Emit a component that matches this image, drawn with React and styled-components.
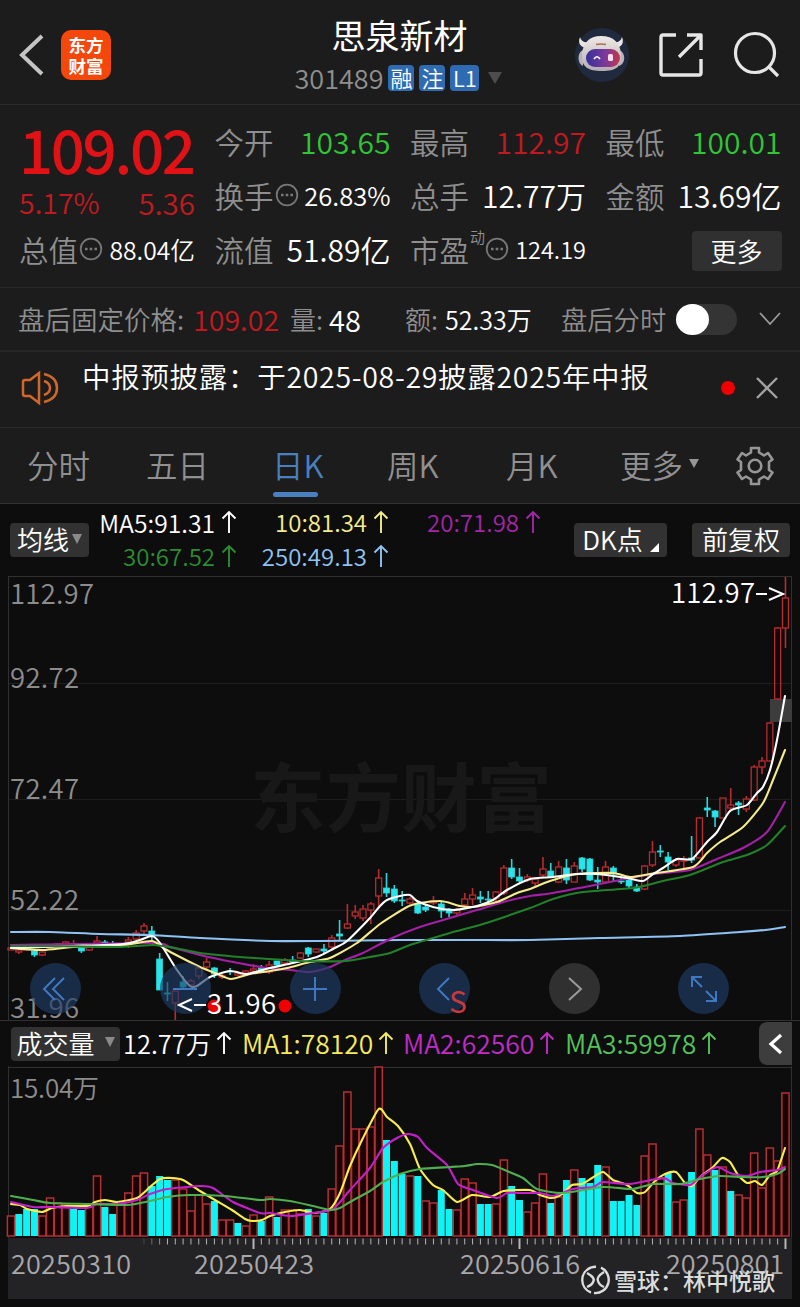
import styled, { createGlobalStyle } from "styled-components"

const GlobalStyle = createGlobalStyle`
    body {
        margin: 0;
        background: #0d0d0d;
        font-family: "Noto Sans CJK SC", "Noto Sans", sans-serif;
        font-weight: 350;
    }

    * {
        box-sizing: border-box;
    }
`;

const RED = "#e01216"
const DARK_RED = "#c01a20"
const GREEN = "#2fc535"
const GREY = "#8f8f8f"

// [up, high, body top, body bottom, low]
const candles = [
    [1, 948, 948, 950, 950], [1, 948, 950, 952, 954], [1, 947, 948, 950, 950], [0, 949, 951, 955, 957],
    [1, 951, 952, 955, 956], [1, 944, 946, 948, 948], [1, 943, 944, 946, 947], [1, 941, 942, 945, 945],
    [1, 940, 944, 946, 946], [0, 943, 947, 951, 953], [1, 946, 947, 950, 951], [1, 936, 941, 943, 944],
    [0, 940, 942, 944, 945], [0, 941, 944, 945, 946], [1, 944, 945, 946, 947], [1, 937, 940, 942, 948],
    [1, 930, 933, 939, 940], [1, 923, 926, 931, 934], [0, 926, 931, 936, 942], [0, 953, 959, 990, 990],
    [0, 982, 993, 994, 1001], [1, 990, 991, 1003, 1020], [0, 976, 982, 987, 989], [1, 979, 981, 985, 986],
    [1, 967, 968, 976, 979], [1, 958, 962, 967, 971], [0, 967, 968, 974, 978], [1, 974, 976, 977, 979],
    [0, 968, 971, 972, 975], [1, 971, 973, 975, 976], [1, 970, 971, 973, 974], [1, 964, 969, 971, 973],
    [0, 965, 968, 970, 972], [1, 961, 965, 972, 974], [0, 961, 961, 965, 967], [1, 958, 960, 963, 965],
    [0, 956, 960, 962, 964], [1, 952, 953, 958, 959], [0, 947, 948, 954, 957], [1, 949, 949, 952, 953],
    [0, 944, 949, 951, 953], [1, 935, 938, 947, 949], [0, 920, 934, 936, 940], [1, 904, 924, 928, 929],
    [1, 905, 912, 916, 919], [1, 905, 909, 918, 921], [1, 902, 904, 910, 924], [1, 869, 878, 896, 906],
    [0, 873, 888, 893, 897], [0, 885, 889, 901, 903], [0, 891, 900, 901, 906], [1, 897, 899, 903, 906],
    [0, 902, 904, 913, 914], [0, 905, 907, 910, 912], [1, 896, 901, 903, 905], [0, 902, 904, 911, 918],
    [0, 908, 909, 913, 917], [1, 908, 910, 913, 915], [1, 893, 899, 905, 907], [1, 888, 895, 899, 905],
    [0, 891, 897, 899, 903], [0, 891, 899, 900, 904], [1, 891, 892, 898, 902], [1, 865, 868, 893, 895],
    [0, 859, 868, 877, 879], [0, 868, 877, 881, 882], [1, 874, 877, 880, 882], [1, 877, 879, 883, 886],
    [1, 857, 869, 875, 877], [0, 863, 871, 877, 878], [1, 861, 867, 882, 883], [0, 859, 868, 880, 884],
    [1, 862, 866, 882, 882], [0, 857, 858, 869, 872], [0, 858, 859, 880, 881], [0, 867, 880, 882, 889],
    [1, 861, 867, 882, 884], [0, 866, 868, 874, 882], [0, 878, 881, 882, 884], [0, 878, 880, 886, 888],
    [0, 884, 887, 891, 892], [1, 865, 866, 889, 890], [1, 841, 852, 865, 867], [0, 845, 851, 852, 857],
    [0, 852, 857, 862, 870], [1, 858, 860, 865, 867], [1, 856, 859, 861, 868], [0, 836, 858, 860, 863],
    [1, 817, 818, 858, 858], [0, 797, 808, 810, 817], [0, 810, 811, 817, 827], [1, 798, 798, 818, 818],
    [1, 788, 805, 808, 811], [0, 801, 803, 805, 815], [1, 796, 799, 809, 812], [1, 765, 767, 800, 801],
    [1, 757, 761, 767, 774], [1, 722, 723, 761, 761], [1, 627, 628, 699, 699], [1, 577, 598, 628, 648],
]

const volumes = [
    20, 22, 27, 27, 20, 38, 33, 32, 27, 26, 29, 60, 29, 22, 31, 43, 60, 63, 50, 60,
    56, 56, 47, 25, 41, 32, 35, 16, 16, 13, 10, 21, 15, 39, 19, 26, 26, 22, 27, 20,
    23, 47, 90, 144, 107, 107, 109, 169, 96, 75, 62, 60, 60, 35, 33, 46, 27, 26, 57, 53,
    32, 32, 32, 76, 50, 36, 24, 33, 62, 33, 39, 56, 66, 58, 53, 71, 69, 35, 35, 41,
    31, 80, 92, 57, 63, 34, 36, 64, 107, 81, 66, 69, 45, 41, 38, 83, 48, 88, 75, 143,
]

const downVolumes = [
    1, 2, 3, 8, 9, 12, 13, 18, 19, 20, 26, 29, 32, 34, 38, 40, 48, 49, 50, 52, 55, 56, 60, 61,
    64, 65, 69, 71, 73, 74, 75, 77, 78, 79, 80, 84, 87, 90, 92,
]

const monthTicks = [31, 65, 99]

const priceLines = [
    ["#8fc3f5", "11,932 50,932 100,934 150,935 200,938 270,941 320,941 400,940 470,940 530,940 600,938 680,936 740,932 765,930 785,927"],
    ["#a320a6", "11,945 152,943 170,947 200,955 233,962 267,968 290,970 310,972 330,967 345,960 363,953 390,939 417,928 450,918 477,910 507,901 530,896 553,893 590,886 620,880 653,874 690,870 717,859 743,848 767,832 785,802"],
    ["#f5ec8c", "11,948 43,950 73,947 123,945 152,941 165,949 180,957 200,967 215,973 231,979 250,974 270,971 287,968 310,962 330,958 357,943 380,924 407,907 420,903 440,901 450,903 460,906 473,907 497,902 517,893 530,889 550,881 577,874 613,873 630,877 650,874 693,867 707,853 720,842 743,827 763,803 773,780 785,750"],
    ["#ffffff", "11,948 73,946 123,944 140,940 152,936 160,943 177,970 190,986 197,986 210,977 230,971 247,974 270,968 293,963 317,957 333,949 347,941 370,918 380,906 387,900 400,896 410,895 417,901 433,907 453,910 477,906 493,900 507,890 530,879 553,877 577,874 597,874 627,878 643,881 653,874 663,868 677,859 692,859 707,842 717,832 730,811 747,805 757,793 763,787 770,770 777,740 785,696"],
    ["#23802a", "11,946 50,946 120,947 153,945 175,948 200,953 240,957 270,959 300,961 345,961 370,957 390,953 410,945 450,933 483,924 530,908 553,899 583,892 633,888 663,881 690,875 723,862 747,855 767,845 785,826"],
]

const volumeLines = [
    ["#f8ee4c", "11,1204 20,1205 27,1209 42,1212 52,1208 66,1206 88,1206 95,1202 105,1200 117,1202 137,1198 150,1187 160,1179 172,1178 183,1180 200,1191 215,1200 232,1210 245,1219 252,1221 262,1220 270,1216 285,1212 300,1210 315,1213 330,1209 340,1193 350,1166 362,1140 378.7,1109 387,1117 398,1126 410,1144 420,1169 433,1185 443,1190 457,1202 472,1195 490,1197 504,1191 530,1190 540,1195 552,1198 562,1194 572,1185 582,1184 592,1178 603,1172 613,1180 627,1185 637,1193 645,1192 655,1181 665,1174 676,1172 685,1183 692,1186 700,1177 713,1167 722,1158 730,1162 738,1175 747,1183 755,1181 762,1185 770,1175 777,1171 785,1148"],
    ["#c41fc8", "11,1202 33,1207 50,1207 87,1208 97,1204 117,1204 137,1200 150,1194 167,1189 200,1186 213,1188 233,1202 260,1213 270,1213 290,1216 313,1213 333,1209 350,1190 370,1168 383,1148 397,1138 408,1134 418,1137 427,1148 447,1165 458,1184 473,1190 497,1198 507,1193 523,1193 540,1193 553,1196 573,1189 593,1187 603,1182 630,1184 663,1178 673,1183 690,1185 700,1177 717,1167 730,1173 747,1176 760,1172 777,1170 785,1167"],
    ["#4fae50", "11,1196 33,1200 50,1203 90,1204 127,1205 150,1201 167,1197 190,1195 225,1196 260,1200 270,1199 290,1201 313,1206 330,1210 340,1208 350,1202 370,1191 383,1182 400,1174 420,1169 450,1167 465,1166 477,1164 492,1165 507,1171 523,1178 537,1189 563,1193 603,1187 633,1189 653,1184 680,1184 700,1179 720,1176 743,1177 763,1177 777,1174 785,1169"],
]

const barX = (i) => 11 + i * 7.823

const smooth = (str) => {
    const p = str.split(" ").map((s) => s.split(",").map(Number))
    let d = `M${p[0]}`
    for (let i = 0; i < p.length - 1; i++) {
        const a = p[i - 1] || p[i]
        const b = p[i]
        const c = p[i + 1]
        const e = p[i + 2] || c
        d += `C${b[0] + (c[0] - a[0]) / 9},${b[1] + (c[1] - a[1]) / 9} ${c[0] - (e[0] - b[0]) / 9},${c[1] - (e[1] - b[1]) / 9} ${c}`
    }
    return d
}

const InfoIcon = () => (
    <svg width="25" height="24" viewBox="-1 0 25 24" fill="none" stroke="#777" strokeWidth="1.8">
        <circle cx="12" cy="12" r="10.3" />
        <path d="M6 12h2.6M10.7 12h2.6M15.4 12h2.6" strokeWidth="2.4" />
    </svg>
)

const UpArrow = ({ color }) => (
    <svg width="16" height="24" viewBox="0 0 16 24" fill="none" stroke={color} strokeWidth="1.9">
        <path d="M8 23V2M1.5 8.500L8 2L14.500 8.500" />
    </svg>
)

const Robot = () => (
    <svg width="56" height="56" viewBox="0 0 56 56">
        <defs>
            <linearGradient id="visor" x1="0" x2="1">
                <stop offset="0" stopColor="#35309a" />
                <stop offset=".55" stopColor="#7a3a9c" />
                <stop offset="1" stopColor="#c2364c" />
            </linearGradient>
            <linearGradient id="shell" x1="0" x2="0" y1="0" y2="1">
                <stop offset="0" stopColor="#efe9e6" />
                <stop offset="1" stopColor="#b5adb2" />
            </linearGradient>
        </defs>
        <circle cx="28" cy="28" r="27" fill="#202a3e" />
        <path d="M6 10C3 17 8 22 15 20L15 15C10 16 7 14 6 10ZM48 10C51 17 46 22 39 20L39 15C44 16 47 14 48 10Z" fill="#eae5e5" />
        <path d="M9 23C3 25 3 37 9 39ZM45 23C52 25 52 37 45 39Z" fill="#b9b2b8" />
        <path d="M27 9C15 9 9 16 8 27C7 40 14 44 28 44C42 44 48 40 47 27C46 16 40 9 27 9Z" fill="url(#shell)" />
        <rect x="12" y="22" width="34" height="18" rx="9" fill="url(#visor)" />
        <path d="M20 32Q23 27.500 26 32" stroke="#fff" strokeWidth="1.700" fill="none" />
        <rect x="34" y="27" width="5" height="7" rx="1.500" fill="#fbdde6" />
        <path d="M22 17.500Q27 16.500 32 17.500" stroke="#a86d55" strokeWidth="1.600" fill="none" />
    </svg>
)

const PriceChart = () => (
    <Drawing width="800" height="444" viewBox="0 576 800 444">
        <path d="M8.500 576V1020M791.500 576V1020M8 576.500H792" stroke="#303030" />
        <path d="M9 683.500H791M9 799.500H791M9 910.500H791" stroke="#1d1d1d" />
        <text x="250" y="826" fontSize="75" fontWeight="700" fill="#181818" textLength="302" lengthAdjust="spacingAndGlyphs">东方财富</text>
        <rect x="770" y="699" width="22" height="23" fill="#3c3c3c" />
        {candles.map(([up, high, top, bottom, low], i) => {
            const x = barX(i)
            const color = up ? "#b82b30" : "#2bd5d9"
            return (
                <g key={i} stroke={color} strokeWidth="1.600">
                    <path d={`M${x} ${high}V${top}M${x} ${bottom}V${low}`} />
                    <rect x={x - 3} y={top} width="6" height={bottom - top} fill={up ? "none" : "#27e5e8"} strokeWidth={up ? 1.300 : 0.800} />
                </g>
            )
        })}
        {priceLines.map(([color, points]) => (
            <path key={color} d={smooth(points)} fill="none" stroke={color} strokeWidth="2.100" strokeLinecap="round" />
        ))}
        <g fill="#8c8c8c" fontSize="27.500">
            <text x="10" y="604" textLength="84">112.97</text>
            <text x="10" y="688" textLength="69">92.72</text>
            <text x="10" y="799" textLength="69">72.47</text>
            <text x="10" y="910" textLength="69">52.22</text>
            <text x="10" y="1018" textLength="69">31.96</text>
        </g>
    </Drawing>
)

const Callouts = () => (
    <Overlay width="800" height="444" viewBox="0 576 800 444">
        <circle cx="214" cy="1006" r="6.500" fill="#f00000" />
        <circle cx="285" cy="1006" r="6.500" fill="#f00000" />
        <g fill="#fff" fontSize="27.500">
            <text x="671" y="603" textLength="84">112.97</text>
            <text x="207" y="1014" textLength="69">31.96</text>
        </g>
        <path d="M756 594H767M769 588L783 594L769 600M192 999L179 1005L192 1011M194 1005H206" stroke="#fff" strokeWidth="2" fill="none" />
    </Overlay>
)

const VolumeChart = () => (
    <Drawing width="800" height="234" viewBox="0 1066 800 234">
        <path d="M8.500 1066V1238M791.500 1066V1238M8 1067.500H792" stroke="#303030" />
        <rect x="8" y="1238" width="784" height="61" fill="#232325" />
        {volumes.map((h, i) => {
            const down = downVolumes.includes(i)
            return (
                <rect
                    key={i}
                    x={barX(i) - (down ? 3.500 : 3.600)}
                    y={1236 - h}
                    width={down ? 7 : 7.200}
                    height={h}
                    fill={down ? "#0ff3f5" : "#1a0303"}
                    stroke={down ? "none" : "#b03136"}
                    strokeWidth="1.500"
                />
            )
        })}
        {volumeLines.map(([color, points]) => (
            <path key={color} d={smooth(points)} fill="none" stroke={color} strokeWidth="2.100" strokeLinecap="round" />
        ))}
        {candles.map((c, i) => i >= 17 && (
            <path
                key={i}
                d={`M${barX(i)} 1238.500V${monthTicks.includes(i) ? 1249 : 1244.500}`}
                stroke="#b5b5b5"
                strokeWidth={monthTicks.includes(i) ? 2 : 1}
                opacity={i < 20 ? (i - 16) / 4 : 1}
            />
        ))}
        <text x="10" y="1098" fontSize="26" fill="#8c8c8c" textLength="89">15.04万</text>
        <g fill="#a9a7aa" fontSize="27">
            <text x="11" y="1274" textLength="120">20250310</text>
            <text x="194" y="1274" textLength="120">20250423</text>
            <text x="460" y="1274" textLength="120">20250616</text>
            <text x="666" y="1274" textLength="118">20250801</text>
        </g>
    </Drawing>
)

const App = () => {
    return (
        <Page>
            <GlobalStyle />

            <Header>
                <BackIcon width="26" height="42" viewBox="0 0 26 42" fill="none" stroke="#c4c4c4" strokeWidth="4">
                    <path d="M23 2L3 21L23 40" />
                </BackIcon>
                <Logo>
                    <span>东方</span>
                    <span>财富</span>
                </Logo>
                <Title>
                    <h1>思泉新材</h1>
                    <Code>
                        <Text $size={27} $color={GREY}>301489</Text>
                        <Badge>融</Badge>
                        <Badge>注</Badge>
                        <Badge $wide>L1</Badge>
                        <Triangle $w={15} $h={12} $color="#4d4d4d" />
                    </Code>
                </Title>
                <Actions>
                    <Robot />
                    <svg width="46" height="46" viewBox="0 0 46 46" fill="none" stroke="#e6e6e6" strokeWidth="3.400" strokeLinejoin="round">
                        <path d="M18 3H5Q3 3 3 5V41Q3 43 5 43H41Q43 43 43 41V27M29 3H43V18M43 3L21 25" />
                    </svg>
                    <svg width="48" height="48" viewBox="0 0 48 48" fill="none" stroke="#e6e6e6" strokeWidth="3.200">
                        <circle cx="23" cy="22" r="19.500" />
                        <path d="M36 35L46 45" />
                    </svg>
                </Actions>
            </Header>

            <Quote>
                <PriceBlock>
                    <Price>109.02</Price>
                    <Change>
                        <Text $size={28.5} $color={DARK_RED}>5.17%</Text>
                        <Text $size={29.5} $color={DARK_RED}>5.36</Text>
                    </Change>
                </PriceBlock>
                <Cell><Label>今开</Label><Text $size={30} $color={GREEN}>103.65</Text></Cell>
                <Cell><Label>最高</Label><Text $size={30} $color={DARK_RED}>112.97</Text></Cell>
                <Cell><Label>最低</Label><Text $size={30} $color={GREEN}>100.01</Text></Cell>
                <Cell><Label>换手<InfoIcon /></Label><Text $size={25.5}>26.83%</Text></Cell>
                <Cell><Label>总手</Label><Text $size={30}>12.77万</Text></Cell>
                <Cell><Label>金额</Label><Text $size={30}>13.69亿</Text></Cell>
                <Cell><Label>总值<InfoIcon /></Label><Text $size={24.7}>88.04亿</Text></Cell>
                <Cell><Label>流值</Label><Text $size={30}>51.89亿</Text></Cell>
                <Cell><Label>市盈<sup>动</sup><InfoIcon /></Label><Text $size={23.5}>124.19</Text></Cell>
                <Cell $end><MoreButton>更多</MoreButton></Cell>
            </Quote>

            <AfterHours>
                <Text $size={26.5} $color={GREY} $w={175}>盘后固定价格:</Text>
                <Text $size={28.6} $color={DARK_RED} $w={97}>109.02</Text>
                <Text $size={26} $color={GREY} $w={39}>量:</Text>
                <Text $size={29} $w={76}>48</Text>
                <Text $size={26} $color={GREY} $w={40}>额:</Text>
                <Text $size={25} $w={116}>52.33万</Text>
                <Text $size={26.3} $color={GREY} $w={115}>盘后分时</Text>
                <Switch><i /></Switch>
                <svg width="24" height="16" viewBox="0 0 24 16" fill="none" stroke="#9a9a9a" strokeWidth="1.800">
                    <path d="M2 2L12 13L22 2" />
                </svg>
            </AfterHours>

            <Notice>
                <svg width="40" height="36" viewBox="0 0 40 36" fill="none" stroke="#d0682c" strokeWidth="2.500">
                    <path d="M18 3V33L9 26H4Q2 26 2 24V12Q2 10 4 10H9L18 3ZM23 11Q29 13 29 18Q29 23 23 25M23 4Q36 7 36 18Q36 29 23 32" />
                </svg>
                <p>中报预披露：于2025-08-29披露2025年中报</p>
                <Dot />
                <svg width="22" height="22" viewBox="0 0 22 22" fill="none" stroke="#a0a0a0" strokeWidth="2.400">
                    <path d="M1 1L21 21M21 1L1 21" />
                </svg>
            </Notice>

            <Tabs>
                <Tab>分时</Tab>
                <Tab>五日</Tab>
                <Tab $active>日K</Tab>
                <Tab>周K</Tab>
                <Tab>月K</Tab>
                <Tab>更多<Triangle $w={11} $h={9} $color="#969696" $left={6} /></Tab>
                <svg width="40" height="40" viewBox="0 0 40 40" fill="none" stroke="#969696" strokeWidth="2.600" strokeLinejoin="round">
                    <path d="M16 2H24V6.500L29 9.500L33 7L37.500 13.500L34 16V24L37.500 26.500L33 33L29 30.500L24 33.500V38H16V33.500L11 30.500L7 33L2.500 26.500L6 24V16L2.500 13.500L7 7L11 9.500L16 6.500Z" />
                    <circle cx="20" cy="20" r="6.300" />
                </svg>
            </Tabs>

            <Toolbar>
                <ToolButton $width={79}>均线<Triangle $w={11} $h={10} $color="#8a8a8a" $left={3} /></ToolButton>
                <Averages>
                    <Average $color="#fff" $size={24.7}>MA5:91.31<UpArrow color="#fff" /></Average>
                    <Average $color="#f5ec8c">10:81.34<UpArrow color="#f5ec8c" /></Average>
                    <Average $color="#a426a8">20:71.98<UpArrow color="#a426a8" /></Average>
                    <Average $color="#2c8c31">30:67.52<UpArrow color="#2c8c31" /></Average>
                    <Average $color="#8fc3f5">250:49.13<UpArrow color="#8fc3f5" /></Average>
                </Averages>
                <ToolButton $width={93}>DK点<Corner /></ToolButton>
                <ToolButton $width={98} $gap={25}>前复权</ToolButton>
            </Toolbar>

            <ChartArea>
                <PriceChart />
                <RoundButton $x={30}>
                    <path d="M25 15L14 26L25 37M34 15L23 26L34 37" />
                </RoundButton>
                <RoundButton $x={160}>
                    <path d="M13 26H37" />
                </RoundButton>
                <RoundButton $x={290}>
                    <path d="M13 26H37M25 14V38" />
                </RoundButton>
                <RoundButton $x={419}>
                    <path d="M30 15L19 26L30 37" />
                </RoundButton>
                <RoundButton $x={549} $grey>
                    <path d="M20 15L32 26L20 37" />
                </RoundButton>
                <RoundButton $x={678}>
                    <path d="M24 24L14 14M14 24V14H24M28 28L38 38M38 28V38H28" />
                </RoundButton>
                <SellMark>S</SellMark>
                <Callouts />
            </ChartArea>

            <VolumeBar>
                <ToolButton $width={109}>成交量<Triangle $w={11} $h={10} $color="#8a8a8a" $left={10} /></ToolButton>
                <VolumeText $color="#fff" $width={119} $size={25.5}>12.77万<UpArrow color="#fff" /></VolumeText>
                <VolumeText $color="#f5ec5c" $width={161}>MA1:78120<UpArrow color="#f5ec5c" /></VolumeText>
                <VolumeText $color="#c32bc8" $width={162}>MA2:62560<UpArrow color="#c32bc8" /></VolumeText>
                <VolumeText $color="#55c25a" $width={160}>MA3:59978<UpArrow color="#55c25a" /></VolumeText>
                <Collapse>
                    <svg width="16" height="24" viewBox="0 0 16 24" fill="none" stroke="#fff" strokeWidth="3.200">
                        <path d="M13 3L3 12L13 21" />
                    </svg>
                </Collapse>
            </VolumeBar>

            <VolumeArea>
                <VolumeChart />
                <Credit>
                    <svg width="30" height="30" viewBox="0 0 30 30" fill="none" stroke="#dcdcdc" strokeWidth="2.400">
                        <path d="M10 2.500A13.300 13.300 0 0 0 10 27.500M13 28A13.300 13.300 0 0 0 20 2.700M15 1.700Q12 1.700 10 2.500" />
                        <path d="M6 8Q15 13 12 17Q11 20 6 22M23 7Q15 12 17 16Q18 20 23 22" />
                    </svg>
                    <span>雪球：林中悦歌</span>
                </Credit>
            </VolumeArea>
        </Page>
    )
}

export default App


const Page = styled.div`
    width: 800px;
    height: 1307px;
    overflow: hidden;
    display: flex;
    flex-direction: column;
    background: #0d0d0d;
    color: #fff;

    svg {
        flex: none;
        display: block;
    }
`;

const Header = styled.header`
    height: 105px;
    flex: none;
    display: flex;
    align-items: center;
    padding: 5px 20px 0 19px;
    background: #1c1c1c;
    border-bottom: 1px solid #2d2d2d;
`;

const BackIcon = styled.svg`
    margin-top: 1px;
`;

const Logo = styled.div`
    width: 50px;
    height: 50px;
    margin: 1px 0 0 16px;
    flex: none;
    display: flex;
    flex-direction: column;
    align-items: center;
    justify-content: center;
    border-radius: 10px;
    background: #f4470b;
    font-size: 17.5px;
    font-weight: 700;
    line-height: 21px;
`;

const Title = styled.div`
    flex: 1;
    display: flex;
    flex-direction: column;
    align-items: center;
    padding: 4px 0 0 114px;

    h1 {
        margin: 0;
        font-size: 34px;
        font-weight: 400;
        line-height: 42px;
    }
`;

const Code = styled.div`
    height: 44px;
    margin-left: -2px;
    display: flex;
    align-items: center;
    gap: 5px;
`;

const Badge = styled.span`
    width: ${(props) => (props.$wide ? 29 : 26)}px;
    height: 26px;
    border-radius: 4px;
    background: #2f6bb3;
    font-size: 22px;
    line-height: 24px;
    text-align: center;
`;

const Triangle = styled.i`
    flex: none;
    margin-left: ${(props) => props.$left || 4}px;
    border-left: ${(props) => props.$w / 2}px solid transparent;
    border-right: ${(props) => props.$w / 2}px solid transparent;
    border-top: ${(props) => props.$h}px solid ${(props) => props.$color};
`;

const Actions = styled.div`
    display: flex;
    align-items: center;
    gap: 28px;
`;

const Text = styled.span`
    width: ${(props) => (props.$w ? `${props.$w}px` : "auto")};
    flex: none;
    color: ${(props) => props.$color || "#fff"};
    font-size: ${(props) => props.$size}px;
    line-height: 40px;
    white-space: nowrap;
`;

const Quote = styled.section`
    height: 183px;
    flex: none;
    display: grid;
    grid-template-columns: repeat(4, 176px);
    grid-template-rows: repeat(3, 54px);
    column-gap: 19.5px;
    padding: 9px 0 0 19px;
    background: #1c1c1c;
    border-bottom: 1px solid #282828;
`;

const PriceBlock = styled.div`
    grid-row: span 2;
    display: flex;
    flex-direction: column;
`;

const Price = styled.strong`
    height: 73px;
    color: ${RED};
    font-size: 60px;
    font-weight: 500;
    line-height: 67px;
    letter-spacing: -2.4px;
`;

const Change = styled.div`
    display: flex;
    justify-content: space-between;
`;

const Cell = styled.div`
    display: flex;
    align-items: center;
    justify-content: ${(props) => (props.$end ? "flex-end" : "space-between")};
`;

const Label = styled.span`
    display: flex;
    align-items: center;
    color: ${GREY};
    font-size: 29.5px;
    line-height: 40px;

    sup {
        align-self: flex-start;
        margin: 0 -1px 0 1px;
        font-size: 15px;
        line-height: 16px;
    }
`;

const MoreButton = styled.button`
    width: 90px;
    height: 40px;
    margin-top: 3px;
    padding: 0;
    border: 0;
    border-radius: 4px;
    background: #303030;
    color: #fff;
    font: inherit;
    font-size: 26px;
    line-height: 36px;
`;

const AfterHours = styled.section`
    height: 64px;
    flex: none;
    display: flex;
    align-items: center;
    padding: 0 0 0 18px;
    background: #1c1c1c;
    border-bottom: 2px solid #262626;
`;

const Switch = styled.div`
    width: 61px;
    height: 31px;
    margin-right: 21px;
    border-radius: 16px;
    background: #343434;

    i {
        display: block;
        width: 33px;
        height: 31px;
        border-radius: 50%;
        background: #fff;
    }
`;

const Notice = styled.section`
    height: 76px;
    flex: none;
    display: flex;
    align-items: center;
    padding: 0 0 3px 21px;
    background: #1c1c1c;
    border-bottom: 1px solid #2b2b2b;

    p {
        width: 639px;
        margin: 0 0 24px 21px;
        font-size: 28.5px;
        line-height: 40px;
        letter-spacing: 0.7px;
        white-space: nowrap;
    }
`;

const Dot = styled.i`
    width: 14px;
    height: 14px;
    margin-right: 21px;
    border-radius: 50%;
    background: #f00000;
`;

const Tabs = styled.nav`
    height: 76px;
    flex: none;
    display: grid;
    grid-template-columns: 119px 126px 115px 119px 114px 115px 40px;
    align-items: center;
    padding-left: 27px;
    background: #1c1c1c;
    border-bottom: 1px solid #333;
`;

const Tab = styled.a`
    height: 75px;
    display: flex;
    align-items: center;
    padding-bottom: 4px;
    color: ${(props) => (props.$active ? "#4a80bf" : "#909090")};
    font-size: 31.5px;
    position: relative;

    &::after {
        content: "";
        display: ${(props) => (props.$active ? "block" : "none")};
        position: absolute;
        left: 1px;
        top: 64px;
        width: 45px;
        height: 5px;
        border-radius: 3px;
        background: #4a80bf;
    }
`;

const Toolbar = styled.div`
    height: 72px;
    flex: none;
    display: flex;
    align-items: center;
    padding-left: 10px;
`;

const ToolButton = styled.button`
    width: ${(props) => props.$width}px;
    height: 34px;
    flex: none;
    display: flex;
    align-items: center;
    justify-content: center;
    margin-left: ${(props) => props.$gap || 0}px;
    padding: 0 0 3px;
    border: 0;
    border-radius: 4px;
    background: #323232;
    color: #fff;
    font: inherit;
    font-size: 26px;
    line-height: 31px;
    white-space: nowrap;
`;

const Corner = styled.i`
    margin: 18px 0 0 7px;
    border-left: 9px solid transparent;
    border-bottom: 9px solid #fff;
`;

const Averages = styled.div`
    width: 485px;
    display: grid;
    grid-template-columns: 148px 152px 152px;
    grid-auto-rows: 34px;
    padding-bottom: 2px;
`;

const Average = styled.span`
    display: flex;
    align-items: center;
    justify-content: flex-end;
    gap: 6px;
    color: ${(props) => props.$color};
    font-size: ${(props) => props.$size || 24}px;
    line-height: 34px;
    white-space: nowrap;
`;

const ChartArea = styled.div`
    position: relative;
    height: 444px;
    flex: none;
`;

const Drawing = styled.svg`
    overflow: visible;
    font-family: "Noto Sans CJK SC", sans-serif;
    font-weight: 350;
`;

const Overlay = styled(Drawing)`
    position: absolute;
    left: 0;
    top: 0;
`;

const RoundButton = styled.svg.attrs({ width: 51, height: 51, viewBox: "0 0 51 51" })`
    position: absolute;
    left: ${(props) => props.$x}px;
    top: 387px;
    border-radius: 50%;
    background: ${(props) => (props.$grey ? "rgba(60, 60, 60, 0.75)" : "rgba(30, 60, 103, 0.65)")};
    fill: none;
    stroke: ${(props) => (props.$grey ? "#9a9a9a" : "#3f78c0")};
    stroke-width: 2px;
`;

const SellMark = styled.span`
    position: absolute;
    left: 449px;
    top: 404px;
    color: #c8393f;
    font-size: 30px;
    font-weight: 400;
    line-height: 40px;
`;

const VolumeBar = styled.div`
    height: 46px;
    flex: none;
    display: flex;
    align-items: center;
    padding-left: 11px;
    border-top: 1px solid #303030;
`;

const VolumeText = styled.span`
    width: ${(props) => props.$width}px;
    flex: none;
    display: flex;
    align-items: center;
    gap: 5px;
    color: ${(props) => props.$color};
    font-size: ${(props) => props.$size || 26.4}px;
    line-height: 36px;
    padding: 0 0 1px 3px;
    white-space: nowrap;
`;

const Collapse = styled.div`
    width: 33px;
    height: 43px;
    margin-left: auto;
    margin-right: 8px;
    display: flex;
    align-items: center;
    justify-content: center;
    border-radius: 8px 0 0 8px;
    background: #3d3d3d;
`;

const VolumeArea = styled.div`
    position: relative;
    height: 234px;
    flex: none;
`;

const Credit = styled.div`
    position: absolute;
    left: 581px;
    top: 199px;
    display: flex;
    align-items: center;
    gap: 3px;
    color: #dcdcdc;
    font-size: 23px;
    font-weight: 500;
    line-height: 30px;
    white-space: nowrap;
`;
